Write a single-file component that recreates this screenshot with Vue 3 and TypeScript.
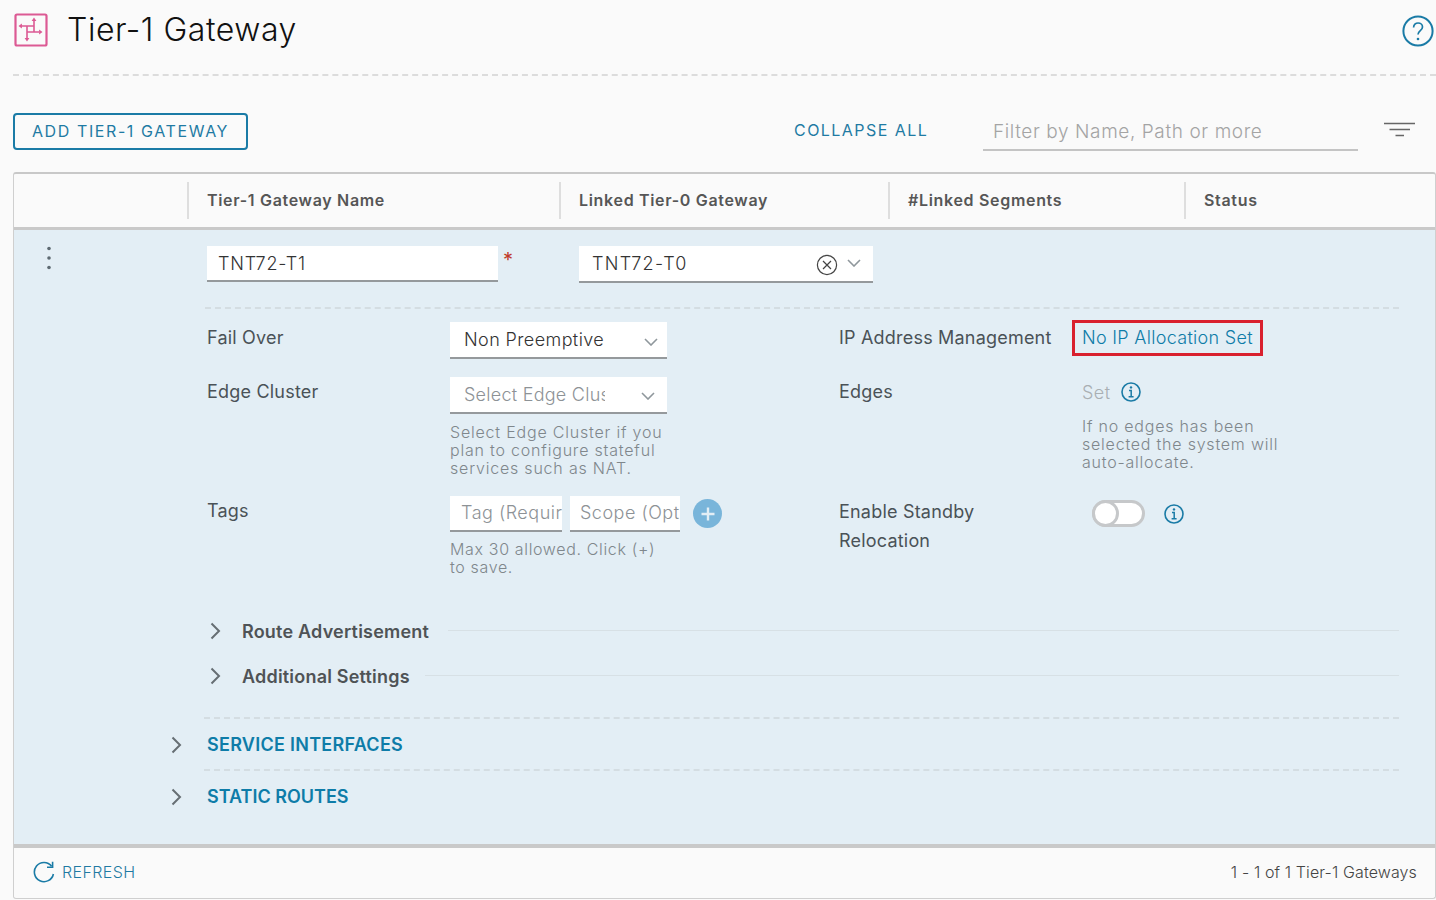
<script setup lang="ts">
interface Column { label: string; width: number }
const columns: Column[] = [
  { label: '', width: 173 },
  { label: 'Tier-1 Gateway Name', width: 372 },
  { label: 'Linked Tier-0 Gateway', width: 329 },
  { label: '#Linked Segments', width: 296 },
  { label: 'Status', width: 251 },
]
</script>

<template>
  <div class="page">
    <header class="title-bar">
      <svg class="logo" width="34" height="34" viewBox="0 0 34 34" fill="none" stroke="#dc5a94">
        <rect x="1.5" y="1.5" width="31" height="31" rx="1.5" stroke-width="2.2" />
        <g stroke-width="1.6">
          <path d="M7 13H20M20 8V19M13 13V25M13 19H25" />
        </g>
        <g fill="#dc5a94" stroke="none">
          <path d="M4.5 13l3.4-2.4v4.8zM20 4.5l2.4 3.4h-4.8zM28.5 19l-3.4-2.4v4.8zM13 28.5l-2.4-3.4h4.8z" />
        </g>
      </svg>
      <h1 class="title">Tier-1 Gateway</h1>
      <svg class="help" width="32" height="32" viewBox="0 0 32 32" fill="none" stroke="#1a7ba6">
        <circle cx="16" cy="16" r="14.6" stroke-width="2" />
        <path d="M11.6 12.4c0-2.6 2-4.4 4.5-4.4s4.4 1.7 4.4 4c0 3.8-4.5 3.6-4.5 7.6" stroke-width="1.7" />
        <circle cx="16" cy="24" r="1.3" fill="#1a7ba6" stroke="none" />
      </svg>
    </header>

    <div class="toolbar">
      <button class="add-btn">ADD TIER-1 GATEWAY</button>
      <span class="collapse">COLLAPSE ALL</span>
      <div class="filter">Filter by Name, Path or more</div>
      <svg class="filter-icon" width="32" height="16" viewBox="0 0 32 16" stroke="#666" stroke-width="1.6">
        <path d="M0 1.5H31M5.5 7.5H26M11.5 13.5H20" />
      </svg>
    </div>

    <section class="card">
      <div class="thead">
        <div v-for="c in columns" :key="c.label" class="th" :style="{ width: c.width + 'px' }">{{ c.label }}</div>
      </div>

      <div class="tbody">
        <div class="name-row">
          <svg class="dots" width="6" height="24" viewBox="0 0 6 24" fill="#5e6a72">
            <circle cx="3" cy="2.5" r="1.8" /><circle cx="3" cy="12" r="1.8" /><circle cx="3" cy="21.5" r="1.8" />
          </svg>
          <div class="field name-field">TNT72-T1</div>
          <span class="required">*</span>
          <div class="field t0-field">
            <span>TNT72-T0</span>
            <svg class="clear" width="22" height="22" viewBox="0 0 22 22" fill="none" stroke="#444">
              <circle cx="11" cy="11" r="9.6" stroke-width="1.2" />
              <path d="M7 7l8 8M15 7l-8 8" stroke-width="1.2" />
            </svg>
            <svg class="chev" width="14" height="8" viewBox="0 0 14 8" fill="none" stroke="#8f979c" stroke-width="1.6">
              <path d="M1 1l6 6 6-6" />
            </svg>
          </div>
        </div>

        <div class="details">
          <div class="label">Fail Over</div>
          <div>
            <div class="field select">
              <span class="sel-text">Non Preemptive</span>
              <svg class="chev chev-a" width="14" height="8" viewBox="0 0 14 8" fill="none" stroke="#8f979c" stroke-width="1.6"><path d="M1 1l6 6 6-6" /></svg>
            </div>
          </div>
          <div class="label">IP Address Management</div>
          <div class="ip-cell"><span class="ip-link">No IP Allocation Set</span></div>

          <div class="label row-two">Edge Cluster</div>
          <div>
            <div class="field select">
              <span class="sel-text muted">Select Edge Cluster</span>
              <svg class="chev chev-b" width="14" height="8" viewBox="0 0 14 8" fill="none" stroke="#8f979c" stroke-width="1.6"><path d="M1 1l6 6 6-6" /></svg>
            </div>
            <p class="hint">Select Edge Cluster if you plan to configure stateful services such as NAT.</p>
          </div>
          <div class="label row-two">Edges</div>
          <div class="edges-cell">
            <div class="set-row">
              <span class="set">Set</span>
              <svg width="20" height="20" viewBox="0 0 20 20" fill="none" stroke="#1a7ba6">
                <circle cx="10" cy="10" r="9" stroke-width="1.6" />
                <path d="M8 8.5h2.2v6M7.6 14.7h5" stroke-width="1.5" />
                <circle cx="10" cy="5.4" r="1.2" fill="#1a7ba6" stroke="none" />
              </svg>
            </div>
            <p class="hint edges-hint">If no edges has been selected the system will auto-allocate.</p>
          </div>

          <div class="label row-two">Tags</div>
          <div>
            <div class="tags">
              <div class="field tag tag-a">Tag (Required)</div>
              <div class="field tag tag-b">Scope (Optional)</div>
              <span class="plus">
                <svg width="16" height="16" viewBox="0 0 16 16" stroke="#e3eef5" stroke-width="2.4"><path d="M8 1.5v13M1.5 8h13" /></svg>
              </span>
            </div>
            <p class="hint tags-hint">Max 30 allowed. Click (+) to save.</p>
          </div>
          <div class="label standby">Enable Standby Relocation</div>
          <div class="toggle-row">
            <span class="toggle"><span class="knob"></span></span>
            <svg width="20" height="20" viewBox="0 0 20 20" fill="none" stroke="#1a7ba6">
              <circle cx="10" cy="10" r="9" stroke-width="1.6" />
              <path d="M8 8.5h2.2v6M7.6 14.7h5" stroke-width="1.5" />
              <circle cx="10" cy="5.4" r="1.2" fill="#1a7ba6" stroke="none" />
            </svg>
          </div>
        </div>

        <div class="sub route">
          <svg class="arrow" width="11" height="18" viewBox="0 0 11 18" fill="none" stroke="#666e73" stroke-width="2"><path d="M1.5 1.5L9 9l-7.5 7.5" /></svg>
          <span class="sub-label">Route Advertisement</span>
          <span class="sub-line"></span>
        </div>
        <div class="sub additional">
          <svg class="arrow" width="11" height="18" viewBox="0 0 11 18" fill="none" stroke="#666e73" stroke-width="2"><path d="M1.5 1.5L9 9l-7.5 7.5" /></svg>
          <span class="sub-label">Additional Settings</span>
          <span class="sub-line"></span>
        </div>

        <div class="section first">
          <svg class="arrow" width="11" height="18" viewBox="0 0 11 18" fill="none" stroke="#666e73" stroke-width="2"><path d="M1.5 1.5L9 9l-7.5 7.5" /></svg>
          <span class="section-label wide">SERVICE INTERFACES</span>
        </div>
        <div class="section">
          <svg class="arrow" width="11" height="18" viewBox="0 0 11 18" fill="none" stroke="#666e73" stroke-width="2"><path d="M1.5 1.5L9 9l-7.5 7.5" /></svg>
          <span class="section-label">STATIC ROUTES</span>
        </div>
      </div>

      <footer class="tfoot">
        <svg width="22" height="22" viewBox="0 0 22 22" fill="none" stroke="#1a7ba6" stroke-width="1.6">
          <path d="M18.6 5.2A9.6 9.6 0 1 0 20.4 13" />
          <path d="M19.6 0.8V6.2H14" />
        </svg>
        <span class="refresh">REFRESH</span>
        <span class="count">1 - 1 of 1 Tier-1 Gateways</span>
      </footer>
    </section>
  </div>
</template>

<style>
html, body { margin: 0; background: #fafafa; overflow: hidden; }
</style>

<style scoped>
* { box-sizing: border-box; }
.page {
  width: 1436px;
  height: 900px;
  padding-left: 13px;
  background: #fafafa;
  font-family: "Inter", "Noto Sans", sans-serif;
  color: #4a4a4a;
  overflow: hidden;
}
.title-bar {
  height: 76px;
  display: flex;
  align-items: flex-start;
  border-bottom: 2px dashed #dcdcdc;
  position: relative;
}
.logo { margin: 13px 0 0 1px; flex: none; }
.title {
  margin: 9px 0 0 19px;
  font-size: 32px;
  line-height: 42px;
  font-weight: 300;
  color: #111;
  letter-spacing: 0.55px;
}
.help { margin: 15px 2px 0 auto; flex: none; }

.toolbar {
  height: 96px;
  padding-top: 37px;
  display: flex;
  align-items: flex-start;
}
.add-btn {
  width: 235px;
  height: 37px;
  border: 2px solid #1a7ba6;
  border-radius: 4px;
  background: transparent;
  color: #1f7aa3;
  font: 400 16px "Inter", sans-serif;
  letter-spacing: 1.6px;
  padding: 0 0 2px;
}
.collapse {
  margin-left: 546px;
  margin-top: 7px;
  width: 189px;
  font-size: 16px;
  line-height: 20px;
  letter-spacing: 1.45px;
  color: #1f7aa3;
}
.filter {
  width: 375px;
  height: 38px;
  padding: 8px 0 0 10px;
  font-size: 19px;
  line-height: 22px;
  font-weight: 300;
  letter-spacing: 0.6px;
  color: #a4a4a4;
  white-space: nowrap;
  border-bottom: 2px solid #c4c4c4;
}
.filter-icon { margin: 9px 0 0 26px; flex: none; }

.card {
  height: 727px;
  border: 1px solid #cfcfcf;
  border-top: 2px solid #c8c8c8;
  border-radius: 3px;
  display: flex;
  flex-direction: column;
  overflow: hidden;
}
.thead {
  height: 56px;
  display: flex;
  align-items: center;
  border-bottom: 3px solid #c9c9c9;
  flex: none;
}
.th {
  height: 37px;
  line-height: 37px;
  padding-left: 18px;
  border-left: 2px solid #dedede;
  font-size: 16px;
  font-weight: 600;
  letter-spacing: 0.68px;
  color: #565656;
  flex: none;
}
.th:first-child { border-left: 0; }

.tbody {
  height: 614px;
  background: #e3eef5;
  padding-top: 16px;
  flex: none;
}
.name-row {
  height: 63px;
  margin-left: 191px;
  display: flex;
  align-items: flex-start;
  position: relative;
  border-bottom: 2px dashed #d4dde2;
  width: 1194px;
}
.dots { position: absolute; left: -159px; top: 0; }
.field {
  background: #fff;
  border-bottom: 2px solid #95999c;
  font-size: 18px;
  color: #333;
  white-space: nowrap;
  overflow: hidden;
}
.name-field {
  margin-left: 2px;
  width: 291px;
  height: 36px;
  line-height: 36px;
  padding-left: 11px;
  font-weight: 300;
  letter-spacing: 0.8px;
}
.required {
  width: 81px;
  color: #c0392b;
  font-size: 20px;
  line-height: 20px;
  padding: 4px 0 0 5px;
}
.t0-field {
  width: 294px;
  height: 37px;
  line-height: 35px;
  padding-left: 13px;
  display: flex;
  align-items: center;
  position: relative;
  font-weight: 300;
  letter-spacing: 1.35px;
}
.clear { position: absolute; left: 237px; top: 8px; }
.t0-field .chev { position: absolute; left: 268px; top: 13px; }

.details {
  margin-left: 193px;
  margin-top: 13px;
  display: grid;
  grid-template-columns: 243px 389px 243px 1fr;
  grid-template-rows: 55px 119px auto;
}
.label {
  font-size: 18px;
  line-height: 30px;
  padding-top: 1px;
  font-weight: 400;
  letter-spacing: 0.2px;
  color: #4a5257;
}
.label.row-two { padding-top: 0; }
.edges-cell { margin-top: -1px; }
.select {
  width: 217px;
  height: 37px;
  line-height: 35px;
  padding-left: 14px;
  position: relative;
}
.sel-text {
  display: block;
  width: 141px;
  overflow: hidden;
  font-weight: 300;
  letter-spacing: 0.4px;
}
.sel-text.muted { letter-spacing: 0.25px; color: #8d9296; }
.select .chev { position: absolute; left: 194px; }
.select .chev-a { top: 16px; }
.select .chev-b { top: 15px; left: 191px; }
.hint {
  margin: 9px 0 0;
  width: 226px;
  font-size: 16px;
  line-height: 18px;
  font-weight: 300;
  letter-spacing: 0.8px;
  color: #7f878c;
}
.tags-hint { margin-top: 8px; width: 215px; letter-spacing: 0.65px; }
.ip-cell { margin: -2px 0 0 -10px; }
.ip-link {
  display: inline-block;
  height: 36px;
  width: 191px;
  padding-left: 7px;
  line-height: 29px;
  border: 3px solid #d9202e;
  font-size: 18px;
  font-weight: 300;
  letter-spacing: 0.3px;
  color: #0e7ca8;
  white-space: nowrap;
}
.set-row {
  display: flex;
  align-items: center;
  gap: 10px;
  height: 32px;
}
.set { font-size: 18px; color: #a9afb3; font-weight: 300; letter-spacing: 0.5px; }
.edges-hint { margin-top: 9px; width: 232px; letter-spacing: 0.78px; }
.tags {
  display: flex;
  align-items: flex-start;
  gap: 8px;
  position: relative;
}
.tag {
  height: 36px;
  line-height: 34px;
  color: #8d9296;
  font-weight: 300;
  letter-spacing: 0.5px;
}
.tag-a { width: 112px; padding-left: 11px; }
.tag-b { width: 110px; padding-left: 10px; }
.plus {
  position: absolute;
  left: 243px;
  top: 3px;
  width: 29px;
  height: 29px;
  border-radius: 50%;
  background: #79b5da;
  display: flex;
  align-items: center;
  justify-content: center;
}
.standby { line-height: 29px; width: 200px; }
.toggle-row {
  display: flex;
  align-items: flex-start;
  gap: 19px;
  margin-left: 10px;
}
.toggle {
  width: 53px;
  height: 27px;
  border: 3px solid #c6c8ca;
  border-radius: 14px;
  background: #fff;
  position: relative;
  margin-top: 4px;
  flex: none;
}
.knob {
  position: absolute;
  left: -3px;
  top: -3px;
  width: 27px;
  height: 27px;
  border-radius: 50%;
  background: #fff;
  border: 3px solid #c6c8ca;
}
.toggle-row svg { margin-top: 8px; }

.sub {
  display: flex;
  align-items: center;
  margin-left: 196px;
  width: 1189px;
  height: 30px;
  color: #4f5356;
}
.route { margin-top: 40px; }
.additional { margin-top: 15px; }
.sub-label {
  margin-left: 21px;
  font-size: 18px;
  font-weight: 600;
  letter-spacing: 0.2px;
  white-space: nowrap;
}
.sub-line {
  flex: 1;
  height: 1px;
  margin: 0 0 1px 19px;
  background: #d7e0e5;
}
.additional .sub-line { margin-left: 15px; }

.section {
  margin-left: 190px;
  width: 1195px;
  height: 52px;
  border-top: 2px dashed #d4dde2;
  display: flex;
  align-items: center;
  position: relative;
}
.section.first { margin-top: 26px; }
.section .arrow { position: absolute; left: -33px; top: 17px; }
.section-label {
  margin-left: 3px;
  font-size: 18px;
  font-weight: 600;
  color: #0e7ca8;
}
.section-label.wide { letter-spacing: 0.27px; }

.tfoot {
  height: 53px;
  flex: none;
  border-top: 4px solid #c9c9c9;
  display: flex;
  align-items: center;
  padding: 0 18px 2px 19px;
  background: #fafafa;
}
.refresh {
  margin-left: 7px;
  font-size: 16px;
  font-weight: 300;
  letter-spacing: 0.4px;
  color: #1f7aa3;
}
.count {
  margin-left: auto;
  font-size: 16px;
  font-weight: 300;
  letter-spacing: 0.12px;
  color: #444;
}
</style>
